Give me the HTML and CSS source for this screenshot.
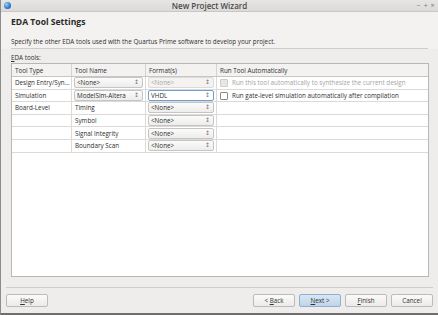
FILE: index.html
```html
<!DOCTYPE html>
<html>
<head>
  <meta name="viewport" content="width=device-width, initial-scale=1">
  <link rel="stylesheet" href="styles.css">
</head>
<body>

<div class="window">
  <div class="titlebar">
    <span class="app-icon"></span>
    <span class="title">New Project Wizard</span>
    <span class="win-btns">&minus; + &times;</span>
  </div>

  <div class="page-head">
    <h1>EDA Tool Settings</h1>
    <p>Specify the other EDA tools used with the Quartus Prime software to develop your project.</p>
  </div>

  <div class="content">
    <div class="label"><u>E</u>DA tools:</div>
    <div class="table-box">
      <table class="tools">
        <tr class="head">
          <th class="c1">Tool Type</th>
          <th class="c2">Tool Name</th>
          <th class="c3">Format(s)</th>
          <th class="c4">Run Tool Automatically</th>
        </tr>
        <tr>
          <td>Design Entry/Syn...</td>
          <td><div class="combo">&lt;None&gt;<span class="arrows">&#8597;</span></div></td>
          <td><div class="combo disabled">&lt;None&gt;<span class="arrows">&#8597;</span></div></td>
          <td class="dim"><span class="check disabled"></span>Run this tool automatically to synthesize the current design</td>
        </tr>
        <tr>
          <td>Simulation</td>
          <td><div class="combo">ModelSim-Altera<span class="arrows">&#8597;</span></div></td>
          <td><div class="combo focus">VHDL<span class="arrows">&#8597;</span></div></td>
          <td><span class="check"></span>Run gate-level simulation automatically after compilation</td>
        </tr>
        <tr>
          <td>Board-Level</td>
          <td>Timing</td>
          <td><div class="combo">&lt;None&gt;<span class="arrows">&#8597;</span></div></td>
          <td></td>
        </tr>
        <tr>
          <td></td>
          <td>Symbol</td>
          <td><div class="combo">&lt;None&gt;<span class="arrows">&#8597;</span></div></td>
          <td></td>
        </tr>
        <tr>
          <td></td>
          <td>Signal Integrity</td>
          <td><div class="combo">&lt;None&gt;<span class="arrows">&#8597;</span></div></td>
          <td></td>
        </tr>
        <tr>
          <td></td>
          <td>Boundary Scan</td>
          <td><div class="combo">&lt;None&gt;<span class="arrows">&#8597;</span></div></td>
          <td></td>
        </tr>
      </table>
    </div>
  </div>

  <div class="footer">
    <button class="btn"><u>H</u>elp</button>
    <div class="spacer"></div>
    <button class="btn">&lt; <u>B</u>ack</button>
    <button class="btn primary"><u>N</u>ext &gt;</button>
    <button class="btn"><u>F</u>inish</button>
    <button class="btn">Cancel</button>
  </div>
</div>

</body>
</html>
```

FILE: styles.css
```css
body {
  margin: 0;
  font-family: "Open Sans", "DejaVu Sans", sans-serif;
  font-size: 6.3px;
  color: #2f2f2f;
  background: #efedeb;
}

.window {
  width: 437px;
  height: 313px;
  border-left: 1px solid #8c8c8c;
  border-bottom: 2px solid #6e6e6e;
  display: flex;
  flex-direction: column;
  background: #efedeb;
}

.titlebar {
  height: 11px;
  display: flex;
  align-items: center;
  position: relative;
  background: linear-gradient(#e6e5e3, #dcdad8);
  border-bottom: 1px solid #c9c7c5;
}

.app-icon {
  width: 7px;
  height: 7px;
  margin-left: 3px;
  border-radius: 50%;
  background: radial-gradient(circle at 35% 35%, #9fd0f5, #2a78c8 60%, #174f8f);
}

.title {
  position: absolute;
  left: 0;
  right: 20px;
  text-align: center;
  font-size: 8px;
  font-weight: 600;
  color: #4a4a4a;
  line-height: 11px;
}

.win-btns {
  margin-left: auto;
  margin-right: 3px;
  font-size: 7px;
  color: #777;
  letter-spacing: 0.5px;
}

.page-head {
  padding: 4px 10px 0 10px;
  background: #f3f2f0;
}

.page-head h1 {
  margin: 0;
  font-size: 8.6px;
  font-weight: 700;
  color: #2a2a2a;
  line-height: 13px;
}

.page-head p {
  margin: 8px 0 0 0;
  padding-bottom: 2px;
  line-height: 9px;
  border-bottom: 1px solid #cfcdcb;
}

.content {
  padding: 4px 9px 0 10px;
  flex: 1;
  display: flex;
  flex-direction: column;
}

.label {
  line-height: 10px;
  margin-bottom: 0;
}

.table-box {
  flex: 1;
  background: #fff;
  border: 1px solid #b9b7b5;
  margin-bottom: 10px;
}

.tools {
  width: 100%;
  border-collapse: collapse;
  table-layout: fixed;
}

.tools th {
  text-align: left;
  font-weight: normal;
  height: 12px;
  padding: 0 0 0 3px;
  background: #f3f2f1;
  border-right: 1px solid #d6d4d2;
  border-bottom: 1px solid #c8c6c4;
}

.tools td {
  height: 11.6px;
  padding: 0 0 0 3px;
  border-right: 1px solid #dcdad8;
  border-bottom: 1px solid #dcdad8;
  white-space: nowrap;
  overflow: hidden;
}

.tools th:last-child,
.tools td:last-child {
  border-right: none;
}

.c1 { width: 56px; }
.c2 { width: 70px; }
.c3 { width: 67px; }

.combo {
  position: relative;
  height: 9px;
  line-height: 9px;
  margin-left: -1px;
  margin-right: 2px;
  padding-left: 2px;
  border: 1px solid #c7c5c3;
  border-radius: 2px;
  background: linear-gradient(#fbfbfb, #eeedec);
}

.combo.disabled {
  color: #a8a8a8;
  background: #f4f3f2;
  border-color: #dddbd9;
}

.combo.focus {
  background: #fff;
  border-color: #6f9fd0;
}

.arrows {
  position: absolute;
  right: 3px;
  top: 0;
  font-size: 6px;
  color: #777;
}

.dim {
  color: #a5a5a5;
}

.check {
  display: inline-block;
  width: 6px;
  height: 6px;
  border: 1px solid #8d8b89;
  border-radius: 1px;
  background: #fff;
  vertical-align: -2px;
  margin-right: 4px;
  margin-left: 0;
}

.check.disabled {
  border-color: #cfcdcb;
  background: #e8e7e6;
}

.footer {
  display: flex;
  gap: 4px;
  padding: 6px 0 6px 0;
  border-top: 1px solid #cfcdcb;
  margin: 0 5px;
}

.spacer {
  flex: 1;
}

.btn {
  width: 42px;
  height: 13px;
  padding: 0;
  font-family: inherit;
  font-size: 6.3px;
  color: #333;
  border: 1px solid #bdbbb9;
  border-radius: 2px;
  background: linear-gradient(#fbfbfa, #ebeae9);
}

.btn.primary {
  background: linear-gradient(#d9e6f3, #bfd4ea);
  border-color: #8fb0d3;
}
```
